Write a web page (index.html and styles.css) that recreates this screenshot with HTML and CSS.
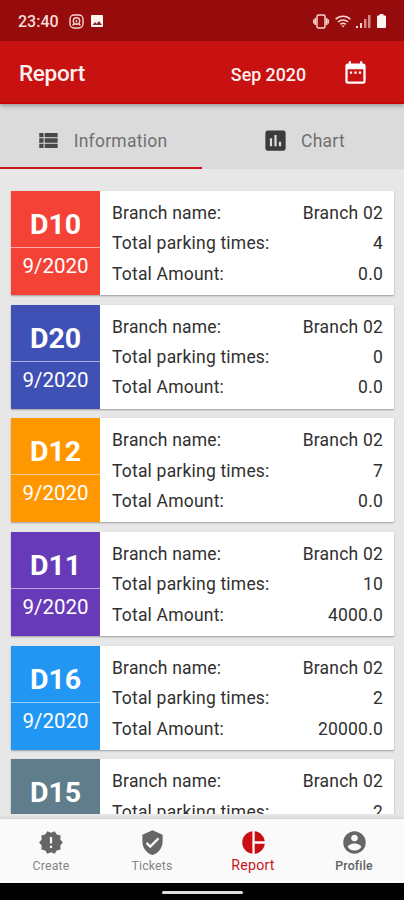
FILE: index.html
```html
<!DOCTYPE html>
<html lang="en">
<head>
  <meta charset="UTF-8">
  <title>Report</title>
  <meta name="viewport" content="width=device-width, initial-scale=1">
  <link rel="stylesheet" href="styles.css">
</head>
<body>
  <div class="status">
    <span class="clock">23:40</span>
    <svg class="cam" width="15" height="15" viewBox="0 0 15 15" fill="none" stroke="#f6d5d0" stroke-width="1.4">
      <rect x="1" y="1" width="13" height="13" rx="4"/>
      <circle cx="7.5" cy="7" r="3.2"/>
      <path d="M7.5 6v2.500M3.500 11.500l1.800-1.800M11.500 11.500L9.700 9.700"/>
    </svg>
    <svg class="pic" width="12" height="12" viewBox="0 0 12 12">
      <rect width="12" height="12" rx="1" fill="#fff4f0"/>
      <path d="M1.500 10l2.500-3 1.700 1.800 2.300-2.800 3 4z" fill="#8a2a2a"/>
    </svg>
    <div class="signals">
      <svg width="16" height="15" viewBox="0 0 16 15" fill="none" stroke="#f6d5d0" stroke-width="1.500">
        <rect x="4" y="1" width="8" height="13" rx="1.500"/>
        <path d="M2.300 4v7M13.700 4v7M.6 5.500v4M15.400 5.500v4"/>
      </svg>
      <svg width="16" height="13" viewBox="0 0 16 13" fill="none" stroke="#f6d5d0" stroke-width="1.500">
        <path d="M.6 4.300a10.500 10.500 0 0 1 14.800 0M3 7a7 7 0 0 1 10 0M5.300 9.400a4 4 0 0 1 5.400 0"/>
        <path d="M6.300 10.600h3.400L8 12.500z" fill="#f6d5d0" stroke="none"/>
      </svg>
      <svg width="15" height="13" viewBox="0 0 15 13" fill="#f6d5d0">
        <path d="M0 11h2v2H0zM4 8h2v5H4z"/>
        <path d="M8 4h2.500v9H8zM12 0h2.500v13H12z" opacity=".65"/>
      </svg>
      <svg width="9" height="14" viewBox="0 0 9 14" fill="#fff4f0">
        <path d="M2.500 0h4v1.500H8q1 0 1 1V13q0 1-1 1H1q-1 0-1-1V2.500q0-1 1-1h1.500z"/>
      </svg>
    </div>
  </div>

  <header class="appbar">
    <h1>Report</h1>
    <span class="month">Sep 2020</span>
    <svg class="calendar" width="27" height="27" viewBox="0 0 24 24" fill="#fff">
      <path d="M9 11H7v2h2v-2zm4 0h-2v2h2v-2zm4 0h-2v2h2v-2zm2-7h-1V2h-2v2H8V2H6v2H5c-1.110 0-1.990.9-1.990 2L3 20c0 1.100.89 2 2 2h14c1.100 0 2-.9 2-2V6c0-1.100-.9-2-2-2zm0 16H5V9h14v11z"/>
    </svg>
  </header>

  <nav class="tabs">
    <div class="tab active">
      <svg width="26" height="27" viewBox="0 0 24 24" fill="#484848">
        <path d="M3 14h4v-4H3v4zm0 5h4v-4H3v4zM3 9h4V5H3v4zm5 5h12v-4H8v4zm0 5h12v-4H8v4zM8 5v4h12V5H8z"/>
      </svg>
      <span>Information</span>
    </div>
    <div class="tab">
      <svg width="27" height="27" viewBox="0 0 24 24" fill="#3c3c3c">
        <path d="M19 3H5c-1.100 0-2 .9-2 2v14c0 1.100.9 2 2 2h14c1.100 0 2-.9 2-2V5c0-1.100-.9-2-2-2zM9 17H7v-7h2v7zm4 0h-2V7h2v10zm4 0h-2v-4h2v4z"/>
      </svg>
      <span>Chart</span>
    </div>
  </nav>

  <main class="list">
    <div class="card">
      <div class="badge red"><b>D10</b><span>9/2020</span></div>
      <dl>
        <dt>Branch name:</dt><dd>Branch 02</dd>
        <dt>Total parking times:</dt><dd>4</dd>
        <dt>Total Amount:</dt><dd>0.0</dd>
      </dl>
    </div>
    <div class="card">
      <div class="badge indigo"><b>D20</b><span>9/2020</span></div>
      <dl>
        <dt>Branch name:</dt><dd>Branch 02</dd>
        <dt>Total parking times:</dt><dd>0</dd>
        <dt>Total Amount:</dt><dd>0.0</dd>
      </dl>
    </div>
    <div class="card">
      <div class="badge orange"><b>D12</b><span>9/2020</span></div>
      <dl>
        <dt>Branch name:</dt><dd>Branch 02</dd>
        <dt>Total parking times:</dt><dd>7</dd>
        <dt>Total Amount:</dt><dd>0.0</dd>
      </dl>
    </div>
    <div class="card">
      <div class="badge purple"><b>D11</b><span>9/2020</span></div>
      <dl>
        <dt>Branch name:</dt><dd>Branch 02</dd>
        <dt>Total parking times:</dt><dd>10</dd>
        <dt>Total Amount:</dt><dd>4000.0</dd>
      </dl>
    </div>
    <div class="card">
      <div class="badge blue"><b>D16</b><span>9/2020</span></div>
      <dl>
        <dt>Branch name:</dt><dd>Branch 02</dd>
        <dt>Total parking times:</dt><dd>2</dd>
        <dt>Total Amount:</dt><dd>20000.0</dd>
      </dl>
    </div>
    <div class="card">
      <div class="badge slate"><b>D15</b></div>
      <dl>
        <dt>Branch name:</dt><dd>Branch 02</dd>
        <dt>Total parking times:</dt><dd>2</dd>
      </dl>
    </div>
  </main>

  <nav class="bottom">
    <a class="item">
      <svg width="26" height="26" viewBox="0 0 24 24" fill="#666">
        <path d="M23 12l-2.440-2.780.34-3.680-3.610-.82-1.890-3.180L12 3 8.600 1.540 6.710 4.720l-3.610.81.34 3.680L1 12l2.440 2.780-.34 3.690 3.610.82 1.890 3.180L12 21l3.400 1.460 1.890-3.180 3.610-.82-.34-3.680L23 12zm-10 5h-2v-2h2v2zm0-4h-2V7h2v6z"/>
      </svg>
      <span>Create</span>
    </a>
    <a class="item">
      <svg width="27" height="27" viewBox="0 0 24 24" fill="#666">
        <path d="M12 1L3 5v6c0 5.550 3.840 10.740 9 12 5.160-1.260 9-6.450 9-12V5l-9-4zm-2 16l-4-4 1.410-1.410L10 14.170l6.590-6.590L18 9l-8 8z"/>
      </svg>
      <span>Tickets</span>
    </a>
    <a class="item current">
      <svg width="27" height="27" viewBox="0 0 24 24" fill="#c90f12">
        <path d="M11 2v20c-5.070-.5-9-4.790-9-10s3.930-9.500 9-10zm2.030 0v8.990H22c-.47-4.740-4.240-8.520-8.970-8.990zm0 11.010V22c4.740-.47 8.500-4.250 8.970-8.990h-8.970z"/>
      </svg>
      <span>Report</span>
    </a>
    <a class="item profile">
      <svg width="27" height="27" viewBox="0 0 24 24" fill="#666">
        <path d="M12 2C6.480 2 2 6.480 2 12s4.480 10 10 10 10-4.480 10-10S17.520 2 12 2zm0 3c1.660 0 3 1.340 3 3s-1.340 3-3 3-3-1.340-3-3 1.340-3 3-3zm0 14.200c-2.500 0-4.710-1.280-6-3.220.03-1.990 4-3.080 6-3.080 1.990 0 5.970 1.090 6 3.080-1.290 1.940-3.500 3.220-6 3.220z"/>
      </svg>
      <span>Profile</span>
    </a>
  </nav>
  <div class="gesture"><i></i></div>
</body>
</html>
```
FILE: styles.css
```css
* { box-sizing: border-box; }
body { margin: 0; height: 900px; display: flex; flex-direction: column; overflow: hidden; background: #e7e7e7; font-family: Roboto, sans-serif; color: #303030; }
svg { display: block; flex: none; }

.status { height: 41px; flex: none; display: flex; align-items: center; padding: 1px 18px 0; background: #960b0b; color: #f9dcd8; }
.clock { font-size: 16px; font-weight: 500; width: 51px; }
.pic { margin-left: 7px; }
.signals { display: flex; align-items: center; gap: 5.700px; margin-left: auto; }

.appbar { height: 63px; flex: none; display: flex; align-items: center; padding: 0 35px 0 19px; background: #c81111; border-bottom: 2px solid #c90406; color: #fff0ee; box-shadow: 0 2px 4px rgba(0,0,0,.3); position: relative; z-index: 1; }
h1 { margin: 3px 0 0; font-size: 22.5px; font-weight: 500; letter-spacing: -.3px; }
.month { margin: 5px 36px 0 auto; font-size: 17.800px; font-weight: 500; }
.calendar { margin-top: 2px; }

.tabs { height: 65px; flex: none; display: flex; background: #dbdbdb; }
.tab { flex: 1; display: flex; align-items: center; justify-content: center; gap: 12px; padding: 10px 0 0 1px; border-bottom: 2px solid transparent; font-size: 17.5px; letter-spacing: .25px; color: #707070; }
.tab.active { border-color: #c9151b; }

.list { flex: 1; min-height: 0; overflow: hidden; padding: 22px 10px 0 11px; margin-bottom: 5px; display: flex; flex-direction: column; gap: 9.700px; }
.card { height: 104px; flex: none; display: flex; background: #fff; border-radius: 1px; box-shadow: 0 1px 2px rgba(0,0,0,.32); }
.badge { width: 89px; text-align: center; color: #fff; }
.badge b { display: block; height: 57px; padding-top: 11px; border-bottom: 1px solid rgba(255,255,255,.55); font-size: 28.500px; line-height: 46px; }
.badge span { display: block; font-size: 20.500px; line-height: 36px; }
.red { background: #f44336; }
.indigo { background: #3f51b5; }
.orange { background: #ff9800; }
.purple { background: #673ab7; }
.blue { background: #2196f3; }
.slate { background: #607d8b; }
dl { flex: 1; margin: 0; padding: 7px 11px 0 12px; display: grid; grid-template-columns: auto auto; grid-auto-rows: 30.400px; align-content: start; font-size: 17.500px; line-height: 30px; letter-spacing: .2px; }
dt, dd { margin: 0; }
dd { text-align: right; }

.bottom { height: 64px; flex: none; display: flex; background: #fafafa; box-shadow: 0 -1px 3px rgba(0,0,0,.12); }
.item { flex: 1; display: flex; flex-direction: column; align-items: center; padding: 10px 0 0 1px; font-size: 12.300px; letter-spacing: .2px; color: #858585; }
.item svg { height: 27px; }
.item span { line-height: 20px; }
.current { color: #c9151b; font-size: 14.200px; }
.current span { margin-top: -1px; }
.profile { color: #606060; font-weight: 500; }
.gesture { height: 17px; flex: none; display: flex; justify-content: center; padding-top: 8px; background: #000; }
.gesture i { width: 81px; height: 3px; border-radius: 2px; background: #ddd; }
```
